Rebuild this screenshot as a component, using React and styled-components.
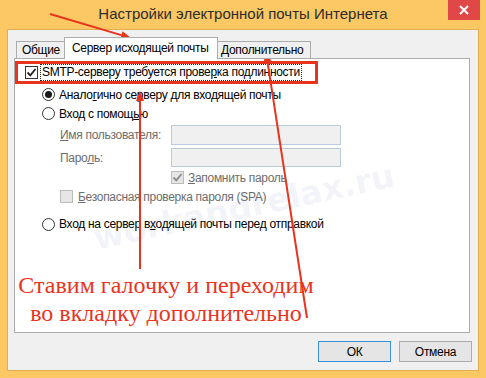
import React from "react";
import styled, { createGlobalStyle } from "styled-components";

const Global = createGlobalStyle`
  html, body { margin: 0; padding: 0; }
  body {
    width: 486px;
    height: 378px;
    overflow: hidden;
    font-family: "Liberation Sans", Arial, sans-serif;
  }
`;

const Frame = styled.div`
  position: relative;
  width: 486px;
  height: 378px;
  background: #fcc863;
  display: flex;
  flex-direction: column;
  box-sizing: border-box;
`;

const TitleBar = styled.div`
  height: 29px;
  display: grid;
  grid-template-columns: 1fr auto 1fr;
  align-items: start;
`;

const Title = styled.div`
  grid-column: 2;
  padding-top: 5px;
  font-size: 15px;
  color: #2c2c2c;
  white-space: nowrap;
`;

const Close = styled.div`
  grid-column: 3;
  justify-self: end;
  margin-right: 6px;
  width: 32px;
  height: 20px;
  background: #e04848;
  display: flex;
  align-items: center;
  justify-content: center;
`;

const Client = styled.div`
  margin: 0 7px 7px 7px;
  border: 1px solid #e0ad55;
  background: #f0f0f0;
  flex: 1;
  padding: 7px 7px 7px 6px;
  display: flex;
  flex-direction: column;
  font-size: 12px;
  letter-spacing: -0.3px;
`;

const TabRow = styled.div`
  display: flex;
  align-items: flex-end;
  padding-left: 2px;
  margin-bottom: -1px;
  position: relative;
  z-index: 1;
`;

const Tab = styled.div`
  box-sizing: border-box;
  width: ${(p) => p.w}px;
  height: ${(p) => (p.active ? 22 : 18)}px;
  border: 1px solid #acacac;
  border-bottom: ${(p) => (p.active ? "none" : "1px solid #acacac")};
  margin-left: ${(p) => (p.first ? 0 : -1)}px;
  background: ${(p) => (p.active ? "#fff" : "#f0f0f0")};
  color: #000;
  font-size: 12px;
  padding-left: ${(p) => p.pad}px;
  padding-top: ${(p) => (p.active ? 3 : 1)}px;
  line-height: 15px;
  white-space: nowrap;
  overflow: hidden;
`;

const Panel = styled.div`
  height: 275px;
  box-sizing: border-box;
  border: 1px solid #acacac;
  background: #fff;
  position: relative;
  margin-right: 1px;
`;

const Callout = styled.div`
  margin-top: 2px;
  width: 303px;
  height: 23px;
  box-sizing: border-box;
  border: 3px solid #e8341c;
  display: flex;
  align-items: center;
  padding-left: 7px;
`;

const Row = styled.div`
  display: flex;
  align-items: center;
  height: ${(p) => p.h || 19}px;
  margin-top: ${(p) => p.mt || 0}px;
  padding-left: ${(p) => p.indent}px;
  color: ${(p) => (p.disabled ? "#6d6d6d" : "#000")};
  white-space: nowrap;
`;

const Box = styled.span`
  box-sizing: border-box;
  width: 13px;
  height: 13px;
  border: 1px solid ${(p) => (p.disabled ? "#bcbcbc" : "#333")};
  background: ${(p) => (p.disabled ? "#e6e6e6" : "#fff")};
  display: inline-flex;
  align-items: center;
  justify-content: center;
  margin-right: ${(p) => p.gap || 4}px;
  flex-shrink: 0;
`;

const Radio = styled.span`
  box-sizing: border-box;
  width: 13px;
  height: 13px;
  border-radius: 50%;
  border: 1px solid #333;
  background: #fff;
  display: inline-flex;
  align-items: center;
  justify-content: center;
  margin-right: 4px;
  flex-shrink: 0;
  &::after {
    content: "";
    width: 7px;
    height: 7px;
    border-radius: 50%;
    background: ${(p) => (p.on ? "#1a1a1a" : "transparent")};
  }
`;

const Focus = styled.span`
  outline: 1px dotted #222;
  padding: 0 1px;
  line-height: 15px;
`;

const Key = styled.span`
  text-decoration: underline;
`;

const Label = styled.span`
  width: 111px;
  color: #6d6d6d;
`;

const Field = styled.span`
  box-sizing: border-box;
  width: 170px;
  height: ${(p) => p.h}px;
  border: 1px solid #b9cbdc;
  background: #f0f0f0;
`;

const Note = styled.div`
  margin-top: 37px;
  width: 302px;
  display: flex;
  flex-direction: column;
  align-items: center;
  font-family: "Liberation Serif", serif;
  font-size: 24px;
  line-height: 28px;
  letter-spacing: 0;
  color: #e8341c;
  white-space: nowrap;
`;

const Footer = styled.div`
  display: flex;
  justify-content: flex-end;
  gap: 8px;
  margin-top: 8px;
  margin-right: -1px;
`;

const Button = styled.div`
  box-sizing: border-box;
  width: 73px;
  height: 21px;
  border: 1px solid ${(p) => (p.primary ? "#3a8fd9" : "#acacac")};
  background: #e5e5e5;
  display: flex;
  align-items: center;
  justify-content: center;
  font-size: 12px;
`;

const Watermark = styled.div`
  position: absolute;
  left: 94px;
  top: 220px;
  transform: rotate(-12deg);
  transform-origin: left center;
  font-family: "DejaVu Sans", sans-serif;
  font-weight: bold;
  font-size: 33px;
  line-height: 38px;
  color: rgba(70, 80, 170, 0.08);
  pointer-events: none;
  white-space: nowrap;
`;

const Arrows = styled.svg`
  position: absolute;
  left: 0;
  top: 0;
  pointer-events: none;
`;

const Check = ({ color }) => (
  <svg width="11" height="11" viewBox="0 0 11 11">
    <path d="M1.5 5.5 L4.3 8.3 L9.5 2" fill="none" stroke={color} strokeWidth="1.8" />
  </svg>
);

const Arrow = ({ x1, y1, x2, y2 }) => {
  const a = Math.atan2(y2 - y1, x2 - x1);
  const len = 10;
  const w = 4;
  const bx = x2 - len * Math.cos(a);
  const by = y2 - len * Math.sin(a);
  const px = -Math.sin(a) * w;
  const py = Math.cos(a) * w;
  return (
    <g>
      <line x1={x1} y1={y1} x2={bx} y2={by} stroke="#e8341c" strokeWidth="2" />
      <polygon
        points={`${x2},${y2} ${bx + px},${by + py} ${bx - px},${by - py}`}
        fill="#e8341c"
      />
    </g>
  );
};

export default function App() {
  return (
    <>
      <Global />
      <Frame>
        <TitleBar>
          <Title>Настройки электронной почты Интернета</Title>
          <Close>
            <svg width="10" height="10" viewBox="0 0 10 10">
              <path d="M1 1 L9 9 M9 1 L1 9" stroke="#fff" strokeWidth="2" />
            </svg>
          </Close>
        </TitleBar>
        <Client>
          <TabRow>
            <Tab first w={49} pad={5}>Общие</Tab>
            <Tab active w={154} pad={7}>Сервер исходящей почты</Tab>
            <Tab w={94} pad={3}>Дополнительно</Tab>
          </TabRow>
          <Panel>
            <Callout>
              <Box gap={3}>
                <Check color="#222" />
              </Box>
              <Focus>
                SMTP-серверу требуется прове<Key>р</Key>ка подлинности
              </Focus>
            </Callout>
            <Row indent={27} mt={1}>
              <Radio on />
              <span>
                Анало<Key>г</Key>ично серверу для входящей почты
              </span>
            </Row>
            <Row indent={27}>
              <Radio />
              <span>
                Вход с помощ<Key>ь</Key>ю
              </span>
            </Row>
            <Row indent={45} h={21} mt={1}>
              <Label>
                <Key>И</Key>мя пользователя:
              </Label>
              <Field h={20} />
            </Row>
            <Row indent={45} h={21} mt={2}>
              <Label>
                Паро<Key>л</Key>ь:
              </Label>
              <Field h={19} />
            </Row>
            <Row indent={156} disabled>
              <Box disabled>
                <Check color="#8a8a8a" />
              </Box>
              <span>
                <Key>З</Key>апомнить пароль
              </span>
            </Row>
            <Row indent={45} disabled>
              <Box disabled gap={5} />
              <span>
                <Key>Б</Key>езопасная проверка пароля (SPA)
              </span>
            </Row>
            <Row indent={27} h={20} mt={8}>
              <Radio />
              <span>
                Вход на сервер в<Key>х</Key>одящей почты перед отправкой
              </span>
            </Row>
            <Note>
              <span>Ставим галочку и переходим</span>
              <span>во вкладку дополнительно</span>
            </Note>
          </Panel>
          <Footer>
            <Button primary>ОК</Button>
            <Button>Отмена</Button>
          </Footer>
        </Client>
        <Watermark>workandrelax.ru</Watermark>
        <Arrows width="486" height="378">
          <Arrow x1={50} y1={14} x2={131} y2={38} />
          <Arrow x1={140} y1={269} x2={140} y2={91} />
          <Arrow x1={307} y1={318} x2={266} y2={52} />
        </Arrows>
      </Frame>
    </>
  );
}
